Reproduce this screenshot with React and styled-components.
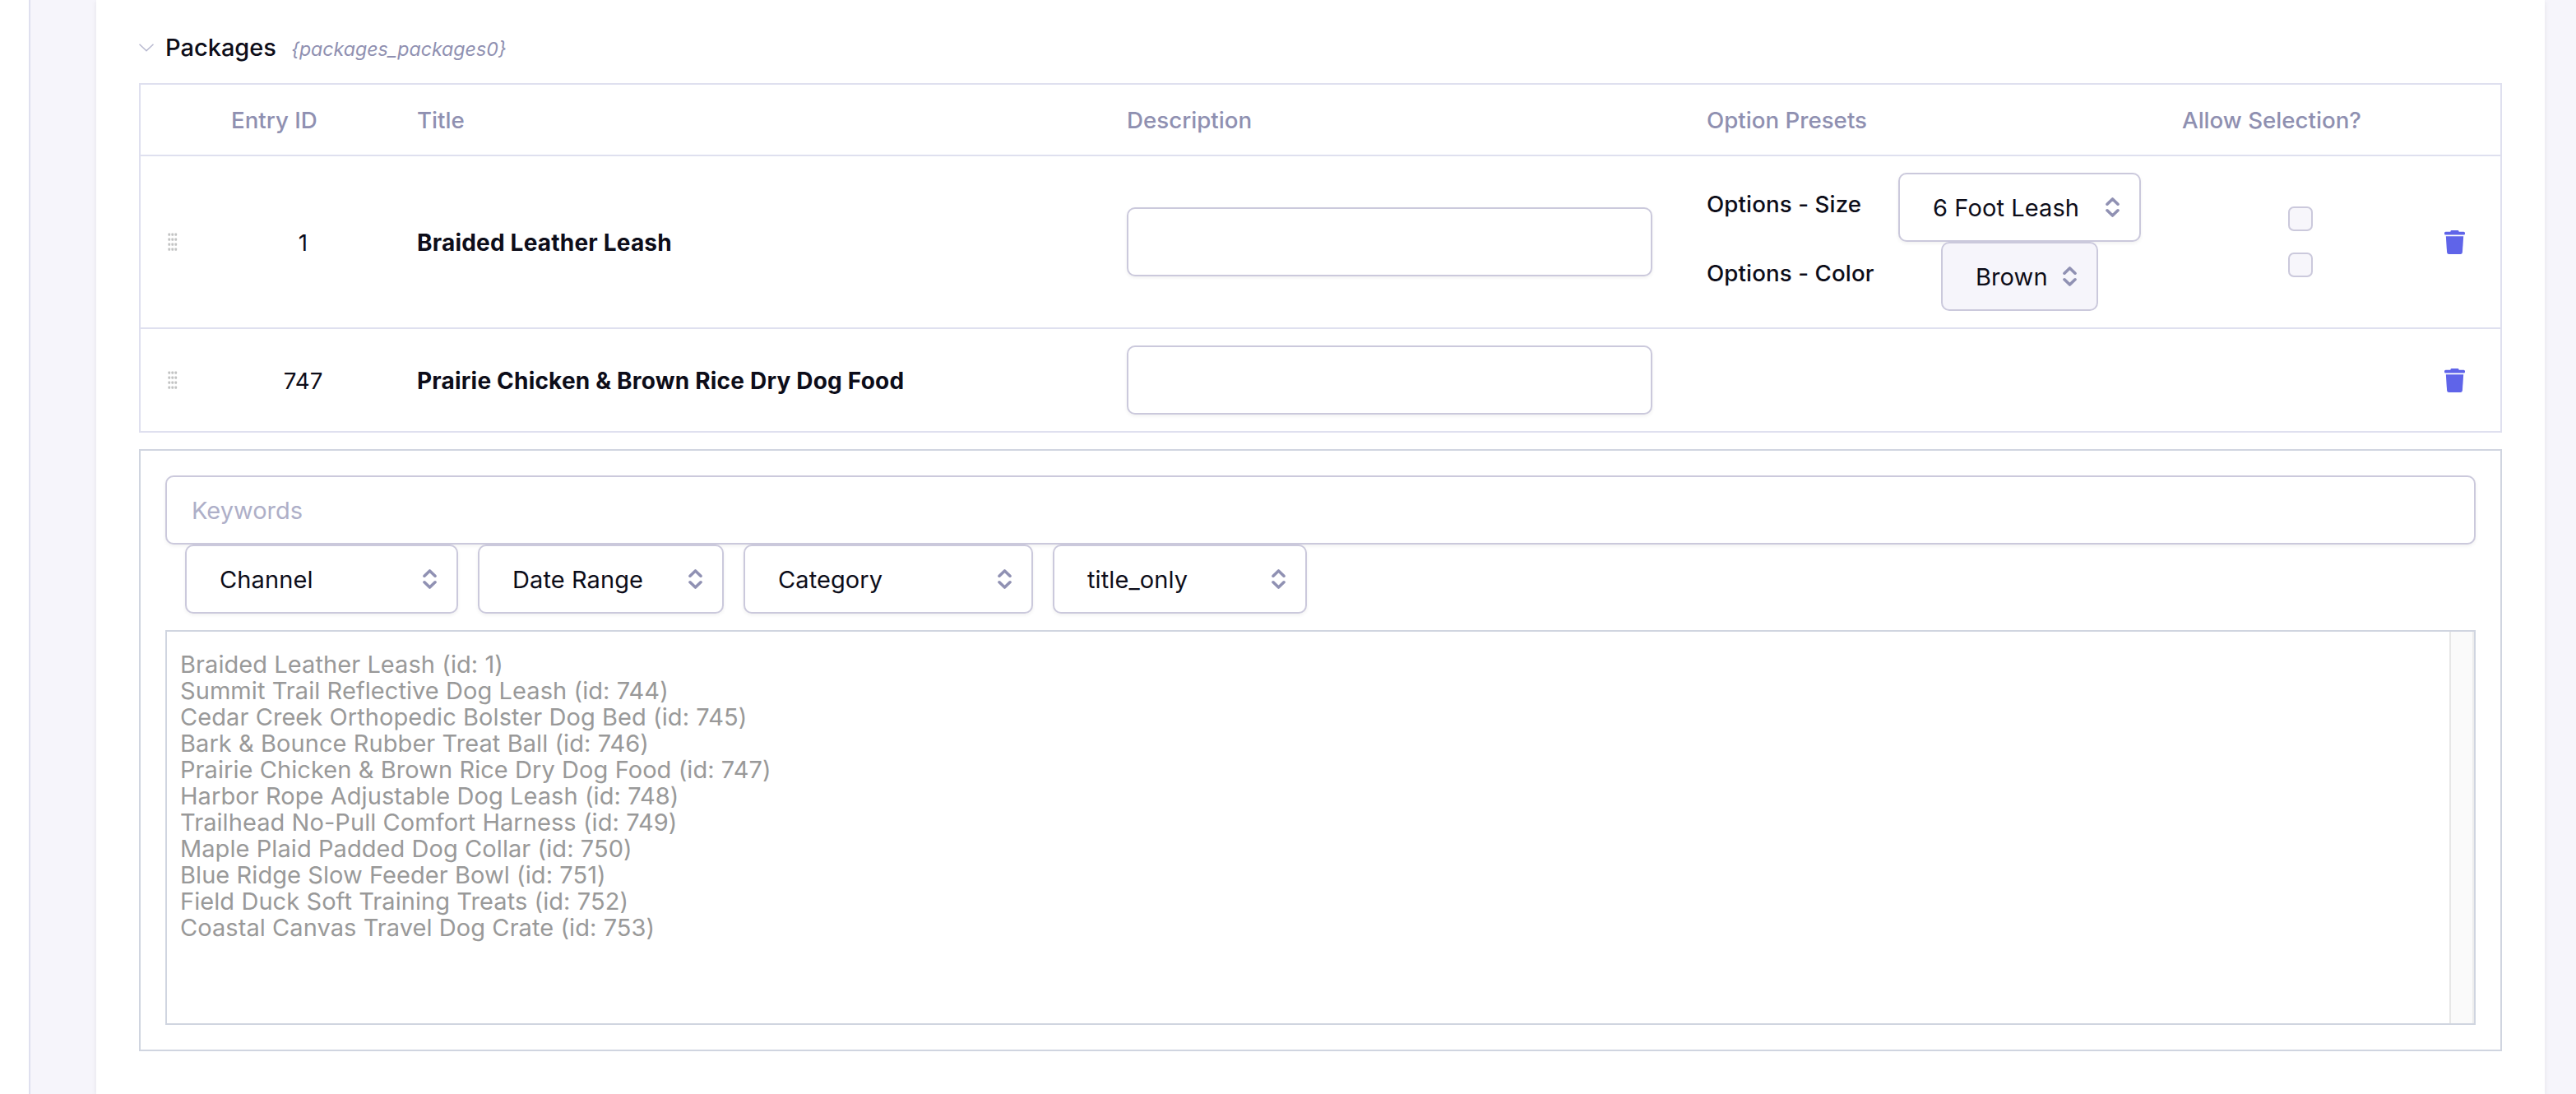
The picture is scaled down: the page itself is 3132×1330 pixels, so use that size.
import React from 'react'
import styled, { createGlobalStyle } from 'styled-components';

const rows = [
    {
        id: 1,
        title: 'Braided Leather Leash',
        options: [
            { label: 'Options - Size', value: '6 Foot Leash', width: 295 },
            { label: 'Options - Color', value: 'Brown', width: 191, active: true },
        ],
    },
    { id: 747, title: 'Prairie Chicken & Brown Rice Dry Dog Food', options: [] },
];

const filters = [
    { label: 'Channel', width: 332 },
    { label: 'Date Range', width: 299 },
    { label: 'Category', width: 352 },
    { label: 'title_only', width: 309 },
];

const entries = [
    { id: 1, title: 'Braided Leather Leash' },
    { id: 744, title: 'Summit Trail Reflective Dog Leash' },
    { id: 745, title: 'Cedar Creek Orthopedic Bolster Dog Bed' },
    { id: 746, title: 'Bark & Bounce Rubber Treat Ball' },
    { id: 747, title: 'Prairie Chicken & Brown Rice Dry Dog Food' },
    { id: 748, title: 'Harbor Rope Adjustable Dog Leash' },
    { id: 749, title: 'Trailhead No-Pull Comfort Harness' },
    { id: 750, title: 'Maple Plaid Padded Dog Collar' },
    { id: 751, title: 'Blue Ridge Slow Feeder Bowl' },
    { id: 752, title: 'Field Duck Soft Training Treats' },
    { id: 753, title: 'Coastal Canvas Travel Dog Crate' },
];

function SortArrows() {
    return (
        <svg width="17" height="24" viewBox="0 0 17 24" fill="none" stroke="#9091b3" strokeWidth="3.6" strokeLinecap="round" strokeLinejoin="round">
            <path d="M2 8.2 8.5 2 15 8.2M2 15.8 8.5 22 15 15.8" />
        </svg>
    )
}

function TrashIcon() {
    return (
        <svg width="25" height="29" viewBox="0 0 25 29" fill="#5f64e9">
            <path d="M8.5 0h8q1 0 1.200 1.700H23.500Q25 1.700 25 3.200v1Q25 5.600 23.500 5.600h-22Q0 5.600 0 4.200v-1Q0 1.700 1.500 1.700H7.300Q7.500 0 8.500 0z" />
            <path d="M1.800 7.300h21.400l-1.300 19.500q-.2 2.200-2.400 2.200h-14q-2.200 0-2.400-2.200z" />
        </svg>
    )
}

function DragHandle() {
    return (
        <svg width="12" height="23" viewBox="0 0 12 23" fill="#c2c3c3">
            {[0, 6, 12, 18].map((y) => [0.4, 4.4, 8.4].map((x) => (
                <rect key={`${x}-${y}`} x={x} y={y + 0.5} width="2.7" height="3.3" rx=".8" />
            )))}
        </svg>
    )
}

function Select({ label, width, active }) {
    return (
        <SelectStyled $width={width} $active={active}>
            <span>{label}</span>
            <SortArrows />
        </SelectStyled>
    )
}

function PackageRow({ row }) {
    return (
        <Row>
            <HandleCell><DragHandle /></HandleCell>
            <IdCell>{row.id}</IdCell>
            <TitleCell>{row.title}</TitleCell>
            <div><TextInput type="text" $width="639px" /></div>
            <div>
                {row.options.map((option) => (
                    <Option key={option.label}>
                        <OptionLabel>{option.label}</OptionLabel>
                        <OptionControl>
                            <Select label={option.value} width={option.width} active={option.active} />
                        </OptionControl>
                    </Option>
                ))}
            </div>
            <CheckCell>
                {row.options.map((option) => <Checkbox key={option.label} type="checkbox" />)}
            </CheckCell>
            <DeleteButton type="button" aria-label="Remove"><TrashIcon /></DeleteButton>
        </Row>
    )
}

function App() {
    return (
        <Page>
            <GlobalStyle />
            <Sidebar />
            <Main>
                <Card>
                    <FieldHeading>
                        <svg width="18" height="10" viewBox="0 0 18 10" fill="none" stroke="#b7b8cf" strokeWidth="1.5">
                            <path d="M.5.7 9 8.800 17.5.7" />
                        </svg>
                        <h3>Packages</h3>
                        <em>{'{packages_packages0}'}</em>
                    </FieldHeading>
                    <Table>
                        <HeadRow>
                            <span />
                            <span>Entry ID</span>
                            <span>Title</span>
                            <span>Description</span>
                            <span>Option Presets</span>
                            <span>Allow Selection?</span>
                            <span />
                        </HeadRow>
                        {rows.map((row) => <PackageRow key={row.id} row={row} />)}
                    </Table>
                    <Picker>
                        <TextInput type="text" placeholder="Keywords" $width="100%" />
                        <Filters>
                            {filters.map((filter) => <Select key={filter.label} {...filter} />)}
                        </Filters>
                        <EntryList>
                            <ul>
                                {entries.map((entry) => (
                                    <li key={entry.id}>{`${entry.title} (id: ${entry.id})`}</li>
                                ))}
                            </ul>
                            <Scrollbar />
                        </EntryList>
                    </Picker>
                </Card>
            </Main>
        </Page>
    )
}

const GlobalStyle = createGlobalStyle`
    *{
        box-sizing: border-box;
    }
    body{
        margin: 0;
        background: #fff;
        color: #0d0d19;
        font-family: Inter, "Liberation Sans", sans-serif;
        font-size: 29px;
        overflow: hidden;
    }
    svg{
        display: block;
        flex: none;
    }
`;

const Page = styled.div`
    display: flex;
    height: 1330px;
    overflow: hidden;
`;

const Sidebar = styled.aside`
    width: 37px;
    flex: none;
    background: #fff;
    border-right: 2px solid #dfe0ef;
`;

const Main = styled.main`
    flex: 1;
    padding: 0 38px 0 80px;
    background: #f6f5fb;
`;

const Card = styled.section`
    height: 100%;
    padding: 0 52px;
    background: #fff;
    box-shadow: 0 2px 6px rgba(0, 0, 0, .08);
`;

const FieldHeading = styled.header`
    display: flex;
    align-items: baseline;
    height: 101px;
    padding-top: 40px;
    svg{
        align-self: flex-start;
        margin-top: 13px;
    }
    h3{
        margin: 0 0 0 14px;
        font-size: 29px;
        font-weight: 500;
        line-height: 35px;
    }
    em{
        margin-left: 18px;
        font-size: 23.2px;
        color: #8f90b1;
    }
`;

const Table = styled.div`
    border: 2px solid #dfe0ef;
    font-size: 27.7px;
`;

const Row = styled.div`
    display: grid;
    grid-template-columns: 110px 226px 863px 705px 578px 319px 68px;
    align-items: center;
    padding: 20px 0;
    &:not(:last-child){
        border-bottom: 2px solid #dfe0ef;
    }
`;

const HeadRow = styled(Row)`
    height: 87px;
    font-weight: 500;
    color: #8f90b1;
`;

const HandleCell = styled.div`
    padding-left: 33px;
`;

const IdCell = styled.div`
    padding: 2px 51px 0 0;
    text-align: center;
`;

const TitleCell = styled.div`
    padding-top: 2px;
    font-size: 28px;
    font-weight: 700;
    letter-spacing: .2px;
`;

const Option = styled.div`
    display: flex;
    align-items: center;
`;

const OptionLabel = styled.label`
    width: 232px;
    padding-bottom: 8px;
    font-weight: 500;
    letter-spacing: .1px;
`;

const OptionControl = styled.div`
    display: flex;
    justify-content: center;
    width: 297px;
`;

const CheckCell = styled.div`
    display: flex;
    flex-direction: column;
    align-items: center;
    gap: 26px;
    padding-right: 31px;
`;

const Checkbox = styled.input`
    appearance: none;
    width: 30px;
    height: 30px;
    margin: 0;
    border: 2px solid #cbc9dc;
    border-radius: 7px;
    background: #f7f6fb;
`;

const DeleteButton = styled.button`
    padding: 0;
    border: 0;
    background: none;
    cursor: pointer;
`;

const TextInput = styled.input`
    display: block;
    width: ${(props) => props.$width};
    height: 84px;
    padding: 0 30px;
    border: 2px solid #cbc9dc;
    border-radius: 10px;
    background: #fff;
    box-shadow: 0 2px 4px rgba(0, 0, 0, .06);
    color: inherit;
    font: 29px Inter, "Liberation Sans", sans-serif;
    &::placeholder{
        color: #aeafc8;
    }
`;

const SelectStyled = styled.div`
    display: flex;
    align-items: center;
    justify-content: space-between;
    width: ${(props) => props.$width}px;
    height: 84px;
    padding: 0 24px 0 40px;
    border: 2px solid #cbc9dc;
    border-radius: 10px;
    background: ${(props) => (props.$active ? '#f6f5fb' : '#fff')};
    box-shadow: ${(props) => (props.$active ? 'none' : '0 2px 4px rgba(0, 0, 0, .06)')};
    font-size: 29px;
    letter-spacing: .1px;
    white-space: nowrap;
`;

const Picker = styled.div`
    margin-top: 20px;
    padding: 30px;
    border: 2px solid #d0d5e0;
`;

const Filters = styled.div`
    display: flex;
    gap: 24px;
    margin: 0 0 20px 24px;
`;

const EntryList = styled.div`
    display: flex;
    justify-content: space-between;
    height: 480px;
    border: 2px solid #d0d5e0;
    ul{
        margin: 0;
        padding: 24px 0 0 16px;
        list-style: none;
        color: #999;
        letter-spacing: .07px;
        line-height: 32px;
    }
`;

const Scrollbar = styled.div`
    width: 30px;
    border-left: 2px solid #e7e7e7;
    border-right: 2px solid #ededed;
    background: #fafafa;
`;

export default App;
